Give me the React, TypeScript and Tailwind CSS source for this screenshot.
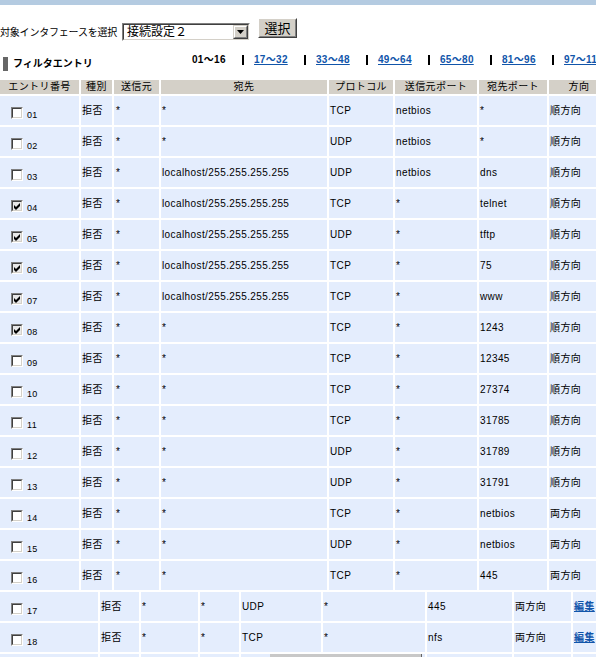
import React from "react";

type Row = { n: string; c: boolean; dst: string; proto: string; sp: string; dp: string; dir: string };

const LH = "localhost/255.255.255.255";

const rows1: Row[] = [
  { n: "01", c: false, dst: "*", proto: "TCP", sp: "netbios", dp: "*", dir: "順方向" },
  { n: "02", c: false, dst: "*", proto: "UDP", sp: "netbios", dp: "*", dir: "順方向" },
  { n: "03", c: false, dst: LH, proto: "UDP", sp: "netbios", dp: "dns", dir: "順方向" },
  { n: "04", c: true, dst: LH, proto: "TCP", sp: "*", dp: "telnet", dir: "順方向" },
  { n: "05", c: true, dst: LH, proto: "UDP", sp: "*", dp: "tftp", dir: "順方向" },
  { n: "06", c: true, dst: LH, proto: "TCP", sp: "*", dp: "75", dir: "順方向" },
  { n: "07", c: true, dst: LH, proto: "TCP", sp: "*", dp: "www", dir: "順方向" },
  { n: "08", c: true, dst: "*", proto: "TCP", sp: "*", dp: "1243", dir: "順方向" },
  { n: "09", c: false, dst: "*", proto: "TCP", sp: "*", dp: "12345", dir: "順方向" },
  { n: "10", c: false, dst: "*", proto: "TCP", sp: "*", dp: "27374", dir: "順方向" },
  { n: "11", c: false, dst: "*", proto: "TCP", sp: "*", dp: "31785", dir: "順方向" },
  { n: "12", c: false, dst: "*", proto: "UDP", sp: "*", dp: "31789", dir: "順方向" },
  { n: "13", c: false, dst: "*", proto: "UDP", sp: "*", dp: "31791", dir: "順方向" },
  { n: "14", c: false, dst: "*", proto: "TCP", sp: "*", dp: "netbios", dir: "両方向" },
  { n: "15", c: false, dst: "*", proto: "UDP", sp: "*", dp: "netbios", dir: "両方向" },
  { n: "16", c: false, dst: "*", proto: "TCP", sp: "*", dp: "445", dir: "両方向" },
];

const rows2: Row[] = [
  { n: "17", c: false, dst: "*", proto: "UDP", sp: "*", dp: "445", dir: "両方向" },
  { n: "18", c: false, dst: "*", proto: "TCP", sp: "*", dp: "nfs", dir: "両方向" },
];

const pages = ["17〜32", "33〜48", "49〜64", "65〜80", "81〜96", "97〜112"];

const cell = "flex items-center pl-[1px] bg-[#e4edfd] whitespace-nowrap overflow-hidden";

function Check({ checked }: { checked: boolean }) {
  return (
    <span className="block w-[12px] h-[12px] shrink-0 border border-t-[#808080] border-l-[#808080] border-r-white border-b-white">
      <span
        className={
          "block w-full h-full border border-t-[#404040] border-l-[#404040] border-r-[#d4d0c8] border-b-[#d4d0c8] " +
          (checked ? "bg-[#e8e8e8]" : "bg-white")
        }
      >
        {checked && (
          <svg viewBox="0 0 7 7" className="block w-[7px] h-[7px] ml-[1px] mt-[1px]">
            <path d="M0 2 L2 4 L6 0 L6 3 L2 7 L0 5 Z" fill="black" />
          </svg>
        )}
      </span>
    </span>
  );
}

function CheckCell({ r }: { r: Row }) {
  return (
    <div className="flex items-center pl-[11px] pt-[4px] bg-[#e4edfd]">
      <div className="flex items-end">
        <Check checked={r.c} />
        <span className="ml-[4px] text-[9px] leading-[8px] tracking-[0.3px]">{r.n}</span>
      </div>
    </div>
  );
}

export default function App() {
  return (
    <div className="relative w-[596px] h-[657px] overflow-hidden bg-white text-black font-['Liberation_Sans','Noto_Sans_CJK_JP',sans-serif] text-[10px] leading-none tracking-[0.4px]">
      <div className="h-[5px] bg-[#b4cbe1]" />

      <div className="flex items-start">
        <span className="mt-[23px] w-[122px] shrink-0 whitespace-nowrap tracking-[-0.2px]">対象インタフェースを選択</span>
        <div className="mt-[18px] w-[128px] h-[18px] border border-t-[#808080] border-l-[#808080] border-r-white border-b-white">
          <div className="flex items-center h-full border border-t-[#404040] border-l-[#404040] border-r-[#d4d0c8] border-b-[#d4d0c8] bg-white">
            <span className="flex-1 pl-[3px] text-[12px] tracking-normal">接続設定２</span>
            <div className="w-[15px] h-[14px] border border-t-[#d4d0c8] border-l-[#d4d0c8] border-r-[#404040] border-b-[#404040]">
              <div className="flex items-center justify-center h-full bg-[#d4d0c8] border border-t-white border-l-white border-r-[#808080] border-b-[#808080]">
                <svg viewBox="0 0 7 4" className="w-[7px] h-[4px]">
                  <path d="M0 0 H7 L3.5 4 Z" fill="black" />
                </svg>
              </div>
            </div>
          </div>
        </div>
        <div className="ml-[8px] mt-[13px] w-[39px] h-[20px] border border-t-white border-l-white border-r-[#404040] border-b-[#404040]">
          <div className="flex items-center justify-center h-full bg-[#d4d0c8] border border-t-[#d4d0c8] border-l-[#d4d0c8] border-r-[#808080] border-b-[#808080] text-[13px] tracking-normal">
            選択
          </div>
        </div>
      </div>

      <div className="flex mt-[12px]">
        <div className="w-[192px] shrink-0 flex items-center h-[14px] mt-[4px]">
          <span className="ml-[3px] w-[5px] h-[14px] bg-[#666666]" />
          <span className="ml-[5px] font-bold tracking-[0px]">フィルタエントリ</span>
        </div>
        <div className="flex items-center h-[14px] whitespace-nowrap font-bold tracking-[0.3px]">
          <span className="w-[50px] shrink-0">01〜16</span>
          <span className="w-[2px] h-[10px] bg-black mr-[10px] shrink-0" />
          {pages.map((p, i) => (
            <React.Fragment key={p}>
              <a className="w-[50px] shrink-0 text-[#1155aa] underline underline-offset-1">{p}</a>
              {i < pages.length - 1 && <span className="w-[2px] h-[10px] bg-black mr-[10px] shrink-0" />}
            </React.Fragment>
          ))}
        </div>
      </div>

      <div className="mt-[9px] flex flex-col gap-y-[2px]">
        <div className="grid grid-cols-[79px_31px_45px_166px_64px_82px_68px_60px] gap-x-[2px] h-[14px]">
          {["エントリ番号", "種別", "送信元", "宛先", "プロトコル", "送信元ポート", "宛先ポート", "方向"].map((h) => (
            <div key={h} className="flex items-center justify-center bg-[#d4d0c8] whitespace-nowrap">
              {h}
            </div>
          ))}
        </div>

        {rows1.map((r) => (
          <div key={r.n} className="grid grid-cols-[79px_31px_45px_166px_64px_82px_68px_60px] gap-x-[2px] h-[29px]">
            <CheckCell r={r} />
            <div className={cell}>拒否</div>
            <div className={cell + " pl-[2px]"}>*</div>
            <div className={cell}>{r.dst}</div>
            <div className={cell}>{r.proto}</div>
            <div className={cell}>{r.sp}</div>
            <div className={cell}>{r.dp}</div>
            <div className={cell}>{r.dir}</div>
          </div>
        ))}

        {rows2.map((r) => (
          <div key={r.n} className="grid grid-cols-[98px_39px_57px_39px_80px_102px_85px_57px_40px] gap-x-[2px] h-[29px]">
            <CheckCell r={r} />
            <div className={cell}>拒否</div>
            <div className={cell}>*</div>
            <div className={cell}>*</div>
            <div className={cell}>{r.proto}</div>
            <div className={cell}>{r.sp}</div>
            <div className={cell}>{r.dp}</div>
            <div className={cell}>{r.dir}</div>
            <div className={cell}>
              <a className="font-bold text-[#1155aa] underline underline-offset-1">編集</a>
            </div>
          </div>
        ))}

        <div className="grid grid-cols-[98px_39px_57px_39px_80px_102px_85px_57px_40px] gap-x-[2px] h-[29px]">
          {Array.from({ length: 9 }).map((_, i) => (
            <div key={i} className="bg-[#e4edfd]" />
          ))}
        </div>
      </div>

      <div className="absolute left-[270px] top-[654px] w-[152px] h-[3px] bg-[#c8c8c8] border-r border-[#666666]" />
    </div>
  );
}
